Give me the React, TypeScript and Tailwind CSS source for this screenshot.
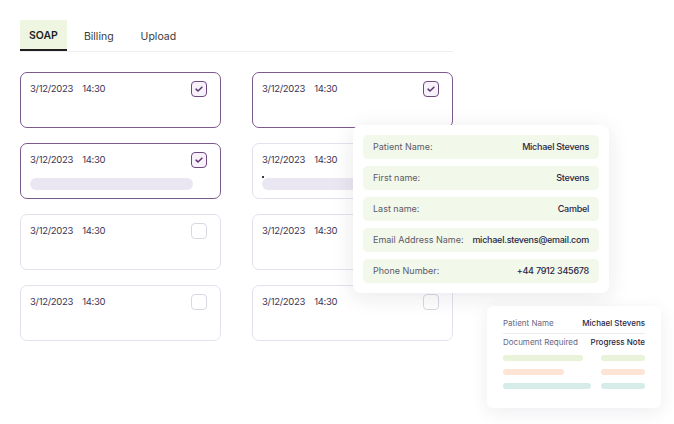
import React from 'react';

type Note = { selected: boolean; bar?: boolean; dash?: boolean };

const notes: Note[] = [
  { selected: true },
  { selected: true },
  { selected: true, bar: true },
  { selected: false, bar: true, dash: true },
  { selected: false },
  { selected: false },
  { selected: false },
  { selected: false },
];

const details = [
  { label: 'Patient Name:', value: 'Michael Stevens' },
  { label: 'First name:', value: 'Stevens' },
  { label: 'Last name:', value: 'Cambel' },
  { label: 'Email Address Name:', value: 'michael.stevens@email.com' },
  { label: 'Phone Number:', value: '+44 7912 345678' },
];

const Checkbox: React.FC<{ checked: boolean }> = ({ checked }) =>
  checked ? (
    <div className="w-4 h-4 rounded-[4px] border-[1.5px] border-[#6e4a80] bg-[#f7f1f9] flex items-center justify-center">
      <svg viewBox="0 0 12 12" className="w-[10px] h-[10px]" fill="none" stroke="#5b3470" strokeWidth={1.8} strokeLinecap="round" strokeLinejoin="round">
        <path d="M2.5 6.2 4.8 8.4 9.5 3.8" />
      </svg>
    </div>
  ) : (
    <div className="w-4 h-4 rounded-[4px] border border-[#dcd6e2] bg-white" />
  );

const NoteCard: React.FC<{ note: Note }> = ({ note }) => (
  <div
    className={`h-[56px] rounded-[7px] border bg-white pl-[9px] pr-[13px] pt-[8px] ${
      note.selected ? 'border-[#7d5a8e]' : 'border-[#e6e0ee]'
    }`}
  >
    <div className="flex items-center justify-between">
      <div className="flex gap-[9px] text-[9.5px] text-[#3b3552] leading-4 tracking-[-0.3px]">
        <span>3/12/2023</span>
        <span>14:30</span>
      </div>
      <Checkbox checked={note.selected} />
    </div>
    {note.bar && (
      <div className="relative mt-[10px] h-[12px] w-[163px] rounded-full bg-[#ebe7f2]">
        {note.dash && <div className="absolute left-0 -top-[2px] w-[2px] h-[1.5px] bg-[#3b3552]" />}
      </div>
    )}
  </div>
);

export default function App() {
  return (
    <div className="relative w-[674px] h-[424px] bg-white overflow-hidden" style={{ fontFamily: 'Inter, "Noto Sans", sans-serif' }}>
      <div className="pl-5 pt-5 w-[453px]">
        <div className="flex gap-[8px] border-b border-[#eeeeee] h-8">
          <div className="px-[9px] pt-[2px] bg-[#eef6e2] border-b-2 border-[#1f1f1f] flex items-center text-[10.5px] font-semibold text-[#1f1f1f]">SOAP</div>
          <div className="px-[9px] pt-[2px] flex items-center text-[10.5px] text-[#3a3a3a]">Billing</div>
          <div className="px-[10px] pt-[2px] flex items-center text-[10.5px] text-[#3a3a3a]">Upload</div>
        </div>
        <div className="mt-5 grid grid-cols-2 gap-x-[31px] gap-y-[15px]">
          {notes.map((n, i) => (
            <NoteCard key={i} note={n} />
          ))}
        </div>
      </div>

      <div className="absolute left-[353px] top-[125px] w-[256px] bg-white rounded-[8px] shadow-[0_4px_22px_rgba(40,30,60,0.10)] p-[10px] flex flex-col gap-[7px]">
        {details.map((d) => (
          <div key={d.label} className="h-6 rounded-[5px] bg-[#f2f8ea] px-[10px] flex items-center justify-between gap-[5px] text-[9px] whitespace-nowrap">
            <span className="text-[#5d5a6b]">{d.label}</span>
            <span className="font-medium text-[#2a2744] tracking-[-0.25px]">{d.value}</span>
          </div>
        ))}
      </div>

      <div className="absolute left-[487px] top-[306px] w-[174px] h-[102px] bg-white rounded-[6px] shadow-[0_4px_18px_rgba(40,30,60,0.08)] px-4 pt-[11px]">
        <div className="flex justify-between items-center text-[8px] pb-[4px] border-b border-[#ecebee]">
          <span className="text-[#6a6680]">Patient Name</span>
          <span className="font-medium text-[#2a2744]">Michael Stevens</span>
        </div>
        <div className="flex justify-between items-center text-[8px] mt-[2px]">
          <span className="text-[#6a6680]">Document Required</span>
          <span className="font-medium text-[#2a2744]">Progress Note</span>
        </div>
        <div className="mt-[7px] flex flex-col gap-[8px]">
          <div className="flex justify-between">
            <div className="h-[6px] w-[80px] rounded-full bg-[#e8f3da]" />
            <div className="h-[6px] w-[44px] rounded-full bg-[#e8f3da]" />
          </div>
          <div className="flex justify-between">
            <div className="h-[6px] w-[61px] rounded-full bg-[#fde4d4]" />
            <div className="h-[6px] w-[44px] rounded-full bg-[#fde4d4]" />
          </div>
          <div className="flex justify-between">
            <div className="h-[6px] w-[88px] rounded-full bg-[#d6ece8]" />
            <div className="h-[6px] w-[44px] rounded-full bg-[#d6ece8]" />
          </div>
        </div>
      </div>
    </div>
  );
}
